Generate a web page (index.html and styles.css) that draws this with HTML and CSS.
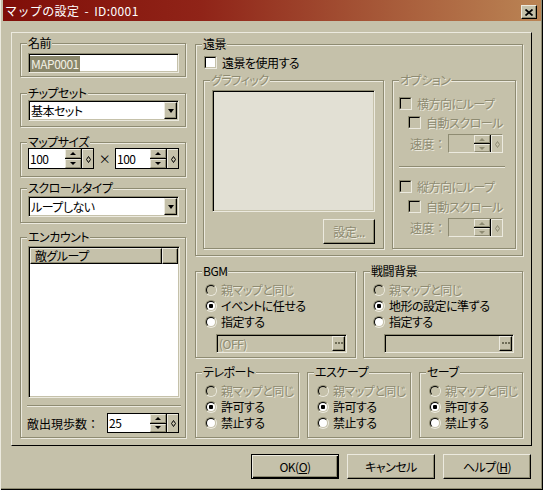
FILE: index.html
```html
<!DOCTYPE html>
<html lang="ja">
<head>
    <meta charset="UTF-8">
    <title>マップの設定</title>
    <link rel="stylesheet" href="styles.css">
</head>
<body>
<div class="window">
    <div class="titlebar">
        <span class="title">マップの設定 - ID:0001</span>
        <span class="close raised">
            <svg width="8" height="7" viewBox="0 0 8 7"><path d="M0.5 0.5 L7.5 6.5 M7.5 0.5 L0.5 6.5" stroke="#000" stroke-width="1.7"/></svg>
        </span>
    </div>

    <div class="panel">
        <!-- left column -->
        <div class="col-left">
            <div class="group g-name">
                <span class="legend">名前</span>
                <div class="edit sunken"><span class="sel">MAP0001</span></div>
            </div>

            <div class="group g-chip">
                <span class="legend">チップセット</span>
                <div class="combo sunken">
                    <span class="combo-text">基本セット</span>
                    <span class="drop raised"><i class="tri-dn-big"></i></span>
                </div>
            </div>

            <div class="group g-size">
                <span class="legend">マップサイズ</span>
                <div class="size-row">
                    <div class="spin w66">
                        <span class="spin-field">100</span>
                        <span class="spin-arrows"><span class="arrow"><i class="tri-up"></i></span><span class="arrow"><i class="tri-dn"></i></span></span>
                        <span class="spin-drag"><svg width="5" height="7" viewBox="0 0 5 7"><path d="M2.5 0.5 L4.5 3.5 L2.5 6.5 L0.5 3.5 Z" fill="none" stroke="#000"/></svg></span>
                    </div>
                    <span class="times">×</span>
                    <div class="spin w64">
                        <span class="spin-field">100</span>
                        <span class="spin-arrows"><span class="arrow"><i class="tri-up"></i></span><span class="arrow"><i class="tri-dn"></i></span></span>
                        <span class="spin-drag"><svg width="5" height="7" viewBox="0 0 5 7"><path d="M2.5 0.5 L4.5 3.5 L2.5 6.5 L0.5 3.5 Z" fill="none" stroke="#000"/></svg></span>
                    </div>
                </div>
            </div>

            <div class="group g-scroll">
                <span class="legend">スクロールタイプ</span>
                <div class="combo sunken">
                    <span class="combo-text">ループしない</span>
                    <span class="drop raised"><i class="tri-dn-big"></i></span>
                </div>
            </div>

            <div class="group g-enc">
                <span class="legend">エンカウント</span>
                <div class="list sunken">
                    <div class="list-head">
                        <span class="hcell">敵グループ</span>
                        <span class="hcell hcell-rest"></span>
                    </div>
                </div>
                <div class="sep sep-enc"></div>
                <div class="steps">
                    <span class="steps-label">敵出現歩数：</span>
                    <div class="spin w72">
                        <span class="spin-field">25</span>
                        <span class="spin-arrows"><span class="arrow"><i class="tri-up"></i></span><span class="arrow"><i class="tri-dn"></i></span></span>
                        <span class="spin-drag"><svg width="5" height="7" viewBox="0 0 5 7"><path d="M2.5 0.5 L4.5 3.5 L2.5 6.5 L0.5 3.5 Z" fill="none" stroke="#000"/></svg></span>
                    </div>
                </div>
            </div>
        </div>

        <!-- right column -->
        <div class="col-right">
            <div class="group g-far">
                <span class="legend">遠景</span>
                <div class="check-row far-use">
                    <span class="check"><span class="check-in"></span></span>
                    <span>遠景を使用する</span>
                </div>
                <div class="far-body">
                    <div class="group g-graphic">
                        <span class="legend dis">グラフィック</span>
                        <div class="picture sunken"></div>
                        <div class="btn btn-set raised"><span class="dis">設定...</span></div>
                    </div>
                    <div class="group g-option">
                        <span class="legend dis">オプション</span>
                        <div class="check-row opt-1">
                            <span class="check off"><span class="check-in"></span></span>
                            <span class="dis">横方向にループ</span>
                        </div>
                        <div class="check-row opt-2">
                            <span class="check off"><span class="check-in"></span></span>
                            <span class="dis">自動スクロール</span>
                        </div>
                        <div class="speed">
                            <span class="speed-label dis">速度：</span>
                            <div class="spin small off">
                                <span class="spin-field"></span>
                                <span class="spin-arrows"><span class="arrow"><i class="tri-up"></i></span><span class="arrow"><i class="tri-dn"></i></span></span>
                                <span class="spin-drag"><svg width="5" height="7" viewBox="0 0 5 7"><path d="M2.5 0.5 L4.5 3.5 L2.5 6.5 L0.5 3.5 Z" fill="none" stroke="#8E8B72"/></svg></span>
                            </div>
                        </div>
                        <div class="sep sep-opt"></div>
                        <div class="check-row opt-3">
                            <span class="check off"><span class="check-in"></span></span>
                            <span class="dis">縦方向にループ</span>
                        </div>
                        <div class="check-row opt-4">
                            <span class="check off"><span class="check-in"></span></span>
                            <span class="dis">自動スクロール</span>
                        </div>
                        <div class="speed">
                            <span class="speed-label dis">速度：</span>
                            <div class="spin small off">
                                <span class="spin-field"></span>
                                <span class="spin-arrows"><span class="arrow"><i class="tri-up"></i></span><span class="arrow"><i class="tri-dn"></i></span></span>
                                <span class="spin-drag"><svg width="5" height="7" viewBox="0 0 5 7"><path d="M2.5 0.5 L4.5 3.5 L2.5 6.5 L0.5 3.5 Z" fill="none" stroke="#8E8B72"/></svg></span>
                            </div>
                        </div>
                    </div>
                </div>
            </div>

            <div class="row2">
                <div class="group g-bgm">
                    <span class="legend">BGM</span>
                    <div class="radios">
                        <div class="radio-row"><span class="radio off"><span class="radio-in"></span></span><span class="dis">親マップと同じ</span></div>
                        <div class="radio-row"><span class="radio"><span class="radio-in"><i class="dot"></i></span></span><span>イベントに任せる</span></div>
                        <div class="radio-row"><span class="radio"><span class="radio-in"></span></span><span>指定する</span></div>
                    </div>
                    <div class="field sunken w131">
                        <span class="field-text dis">(OFF)</span>
                        <span class="dots raised"><svg width="8" height="3" viewBox="0 0 8 3"><rect x="0" y="0" width="2" height="2" fill="#6F6D58"/><rect x="3" y="0" width="2" height="2" fill="#6F6D58"/><rect x="6" y="0" width="2" height="2" fill="#6F6D58"/></svg></span>
                    </div>
                </div>
                <div class="group g-battle">
                    <span class="legend">戦闘背景</span>
                    <div class="radios">
                        <div class="radio-row"><span class="radio off"><span class="radio-in"></span></span><span class="dis">親マップと同じ</span></div>
                        <div class="radio-row"><span class="radio"><span class="radio-in"><i class="dot"></i></span></span><span>地形の設定に準ずる</span></div>
                        <div class="radio-row"><span class="radio"><span class="radio-in"></span></span><span>指定する</span></div>
                    </div>
                    <div class="field sunken w130">
                        <span class="field-text"></span>
                        <span class="dots raised"><svg width="8" height="3" viewBox="0 0 8 3"><rect x="0" y="0" width="2" height="2" fill="#6F6D58"/><rect x="3" y="0" width="2" height="2" fill="#6F6D58"/><rect x="6" y="0" width="2" height="2" fill="#6F6D58"/></svg></span>
                    </div>
                </div>
            </div>

            <div class="row3">
                <div class="group g-small">
                    <span class="legend">テレポート</span>
                    <div class="radios">
                        <div class="radio-row"><span class="radio off"><span class="radio-in"></span></span><span class="dis">親マップと同じ</span></div>
                        <div class="radio-row"><span class="radio"><span class="radio-in"><i class="dot"></i></span></span><span>許可する</span></div>
                        <div class="radio-row"><span class="radio"><span class="radio-in"></span></span><span>禁止する</span></div>
                    </div>
                </div>
                <div class="group g-small">
                    <span class="legend">エスケープ</span>
                    <div class="radios">
                        <div class="radio-row"><span class="radio off"><span class="radio-in"></span></span><span class="dis">親マップと同じ</span></div>
                        <div class="radio-row"><span class="radio"><span class="radio-in"><i class="dot"></i></span></span><span>許可する</span></div>
                        <div class="radio-row"><span class="radio"><span class="radio-in"></span></span><span>禁止する</span></div>
                    </div>
                </div>
                <div class="group g-small">
                    <span class="legend">セーブ</span>
                    <div class="radios">
                        <div class="radio-row"><span class="radio off"><span class="radio-in"></span></span><span class="dis">親マップと同じ</span></div>
                        <div class="radio-row"><span class="radio"><span class="radio-in"><i class="dot"></i></span></span><span>許可する</span></div>
                        <div class="radio-row"><span class="radio"><span class="radio-in"></span></span><span>禁止する</span></div>
                    </div>
                </div>
            </div>
        </div>
    </div>

    <div class="buttons">
        <div class="btn btn-main default">OK(<u>O</u>)</div>
        <div class="btn btn-main raised">キャンセル</div>
        <div class="btn btn-main raised">ヘルプ(<u>H</u>)</div>
    </div>
</div>
</body>
</html>
```

FILE: styles.css
```css
* {
    box-sizing: border-box;
}
body {
    margin: 0;
    background: #C5C1AA;
    font-family: "Noto Sans CJK JP", "Noto Sans", sans-serif;
    font-size: 12px;
    letter-spacing: -0.5px;
    color: #000;
    font-feature-settings: "palt";
}
.window {
    width: 543px;
    height: 490px;
    background: #C5C1AA;
    box-shadow: inset 1px 0 0 #ECEADF, inset -1px -1px 0 #000, inset -2px -2px 0 #8E8B72;
    overflow: hidden;
}

/* title bar */
.titlebar {
    margin-left: 3px;
    width: 538px;
    height: 21px;
    display: flex;
    justify-content: space-between;
    align-items: flex-start;
    padding: 0 4px 0 2px;
    background: linear-gradient(to right, #800E08 0%, #902418 37%, #A65838 70%, #AE6842 81%, #BA8454 100%);
}
.title {
    color: #fff;
    line-height: 21px;
    letter-spacing: 0.4px;
    word-spacing: 2px;
    font-feature-settings: normal;
}
.close {
    width: 16px;
    height: 14px;
    margin-top: 5px;
    display: flex;
    align-items: center;
    justify-content: center;
    background: #C5C1AA;
}

/* 3d borders */
.raised {
    border: 1px solid;
    border-color: #ECEADF #000 #000 #ECEADF;
    box-shadow: inset -1px -1px 0 #8E8B72;
    background: #C5C1AA;
}
.sunken {
    border: 1px solid;
    border-color: #8E8B72 #ECEADF #ECEADF #8E8B72;
    box-shadow: inset 1px 1px 0 #000, inset -1px -1px 0 #C5C1AA;
}
.dis {
    color: #8E8B72;
    text-shadow: 1px 1px 0 #ECEADF;
}

/* main panel */
.panel {
    margin: 11px 0 0 11px;
    width: 521px;
    height: 414px;
    border: 1px solid;
    border-color: #ECEADF #000 #000 #ECEADF;
    padding: 10px 0 0 8px;
    display: flex;
    align-items: flex-start;
}
.col-left {
    width: 166px;
}
.col-right {
    width: 328px;
    margin: 1px 0 0 9px;
}

/* group box */
.group {
    border: 1px solid #8E8B72;
    box-shadow: 1px 1px 0 #ECEADF, inset 1px 1px 0 #ECEADF;
}
.legend {
    display: block;
    width: fit-content;
    height: 12px;
    line-height: 12px;
    margin: -7px 0 0 6px;
    padding: 0 1px;
    background: #C5C1AA;
    white-space: nowrap;
}

.g-name { height: 34px; }
.g-chip { height: 34px; margin-top: 16px; }
.g-size { height: 35px; margin-top: 15px; }
.g-scroll { height: 35px; margin-top: 11px; }
.g-enc { height: 201px; margin-top: 14px; }

/* edit / combo */
.edit {
    width: 151px;
    height: 20px;
    margin: 4px 0 0 7px;
    padding: 1px 1px;
    background: #fff;
}
.sel {
    display: inline-block;
    height: 16px;
    line-height: 16px;
    padding: 0 1px;
    background: #8A876B;
    color: #F2F0E4;
}
.combo {
    width: 151px;
    height: 21px;
    margin: 1px 0 0 7px;
    padding: 1px;
    background: #fff;
    display: flex;
}
.g-scroll .combo {
    margin-top: 2px;
}
.combo-text {
    flex: 1;
    line-height: 17px;
    padding-left: 1px;
}
.drop {
    width: 13px;
    height: 17px;
    display: flex;
    align-items: center;
    justify-content: center;
}
.tri-dn-big {
    width: 0;
    height: 0;
    border-left: 3.5px solid transparent;
    border-right: 3.5px solid transparent;
    border-top: 4px solid #000;
}

/* spinner */
.size-row {
    display: flex;
    align-items: center;
    margin-left: 7px;
}
.times {
    width: 21px;
    text-align: center;
    line-height: 21px;
}
.spin {
    display: flex;
    height: 21px;
    border: 1px solid #000;
    background: #000;
}
.w66 { width: 66px; }
.w64 { width: 64px; }
.w72 { width: 72px; height: 20px; }
.spin-field {
    flex: 1;
    background: #fff;
    line-height: 19px;
    padding-left: 1px;
}
.w72 .spin-field { line-height: 18px; }
.spin-arrows {
    width: 16px;
    display: flex;
    flex-direction: column;
    gap: 1px;
}
.arrow {
    flex: 1;
    background: #C5C1AA;
    border: 1px solid;
    border-color: #ECEADF #8E8B72 #8E8B72 #ECEADF;
    display: flex;
    align-items: center;
    justify-content: center;
}
.tri-up {
    width: 0;
    height: 0;
    border-left: 3px solid transparent;
    border-right: 3px solid transparent;
    border-bottom: 3px solid #000;
}
.tri-dn {
    width: 0;
    height: 0;
    border-left: 3px solid transparent;
    border-right: 3px solid transparent;
    border-top: 3px solid #000;
}
.spin-drag {
    width: 11px;
    margin-left: 1px;
    background: #C5C1AA;
    border-top: 1px solid #ECEADF;
    border-left: 1px solid #ECEADF;
    display: flex;
    align-items: center;
    justify-content: center;
}
.spin.small {
    width: 55px;
    height: 19px;
    border-color: #8E8B72 #ECEADF #ECEADF #8E8B72;
    box-shadow: inset 1px 1px 0 #000;
}
.spin.off .spin-field {
    background: #C5C1AA;
}
.spin.off .tri-up { border-bottom-color: #8E8B72; }
.spin.off .tri-dn { border-top-color: #8E8B72; }

/* list */
.list {
    width: 152px;
    height: 152px;
    margin: 3px 0 0 7px;
    padding: 1px;
    background: #fff;
}
.list-head {
    display: flex;
    height: 16px;
}
.hcell {
    width: 132px;
    line-height: 14px;
    padding-left: 4px;
    border: 1px solid;
    border-color: #ECEADF #000 #000 #ECEADF;
    box-shadow: inset -1px -1px 0 #8E8B72;
    background: #C5C1AA;
}
.hcell-rest {
    width: auto;
    flex: 1;
}
.sep {
    height: 2px;
    border-top: 1px solid #8E8B72;
    border-bottom: 1px solid #ECEADF;
}
.sep-enc {
    width: 154px;
    margin: 7px 0 0 6px;
}
.steps {
    display: flex;
    align-items: center;
    margin: 6px 0 0 6px;
}
.steps-label {
    width: 80px;
    font-feature-settings: normal;
    letter-spacing: 0;
}

/* right column */
.g-far {
    height: 212px;
}
.check-row {
    display: flex;
    align-items: center;
    gap: 5px;
    height: 13px;
    line-height: 13px;
    white-space: nowrap;
}
.far-use {
    margin: 6px 0 0 8px;
}
.check {
    width: 13px;
    height: 13px;
    flex: none;
    border: 1px solid;
    border-color: #8E8B72 #ECEADF #ECEADF #8E8B72;
}
.check-in {
    display: block;
    width: 11px;
    height: 11px;
    border: 1px solid;
    border-color: #000 #C5C1AA #C5C1AA #000;
    background: #fff;
}
.check.off .check-in {
    background: #C5C1AA;
}
.far-body {
    display: flex;
    margin: 11px 0 0 7px;
}
.g-graphic {
    width: 181px;
    height: 169px;
}
.picture {
    width: 163px;
    height: 122px;
    margin: 4px 0 0 8px;
    background: #E2E0D4;
}
.btn {
    display: flex;
    align-items: center;
    justify-content: center;
    background: #C5C1AA;
}
.btn-set {
    width: 52px;
    height: 25px;
    margin: 7px 0 0 119px;
}
.g-option {
    width: 124px;
    height: 169px;
    margin-left: 8px;
}
.opt-1 { margin: 11px 0 0 6px; }
.opt-2 { margin: 6px 0 0 15px; }
.opt-3 { margin: 12px 0 0 6px; }
.opt-4 { margin: 7px 0 0 15px; }
.speed {
    display: flex;
    align-items: center;
    height: 19px;
    margin: 5px 0 0 17px;
}
.speed-label {
    width: 38px;
    font-feature-settings: normal;
    letter-spacing: 0;
}
.sep-opt {
    width: 106px;
    margin: 13px 0 0 6px;
}

/* radio groups */
.row2, .row3 {
    display: flex;
}
.row2 {
    margin-top: 15px;
    gap: 7px;
}
.row3 {
    margin-top: 14px;
    gap: 8px;
}
.g-bgm { width: 161px; height: 87px; }
.g-battle { width: 160px; height: 87px; }
.g-small { width: 104px; height: 66px; }
.radios {
    margin: 5px 0 0 9px;
}
.radio-row {
    display: flex;
    align-items: center;
    gap: 4px;
    height: 16px;
    line-height: 16px;
    white-space: nowrap;
}
.radio {
    width: 12px;
    height: 12px;
    flex: none;
    border-radius: 50%;
    border: 1px solid;
    border-color: #8E8B72 #ECEADF #ECEADF #8E8B72;
}
.radio-in {
    width: 10px;
    height: 10px;
    border-radius: 50%;
    border: 1px solid;
    border-color: #000 #C5C1AA #C5C1AA #000;
    background: #fff;
    display: flex;
    align-items: center;
    justify-content: center;
}
.radio.off .radio-in {
    background: #C5C1AA;
}
.dot {
    width: 4px;
    height: 4px;
    border-radius: 1px;
    background: #000;
}
.field {
    height: 19px;
    margin: 4px 0 0 20px;
    padding: 1px;
    display: flex;
    background: #C5C1AA;
}
.w131 { width: 131px; }
.w130 { width: 130px; }
.field-text {
    flex: 1;
    line-height: 15px;
    padding-left: 1px;
}
.dots {
    width: 13px;
    height: 15px;
    display: flex;
    align-items: center;
    justify-content: center;
}

/* bottom buttons */
.buttons {
    display: flex;
    gap: 8px;
    margin: 8px 0 0 251px;
}
.btn-main {
    width: 88px;
    height: 25px;
}
.default {
    border: 1px solid #000;
    box-shadow: inset 1px 1px 0 #ECEADF, inset -1px -1px 0 #000, inset -2px -2px 0 #8E8B72;
}
```
